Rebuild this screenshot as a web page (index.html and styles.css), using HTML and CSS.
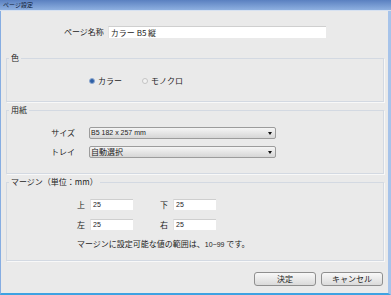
FILE: index.html
```html
<!DOCTYPE html>
<html lang="ja">
<head>
<meta charset="utf-8">
<title>ページ設定</title>
<link rel="stylesheet" href="styles.css">
</head>
<body>
<div class="window">
  <div class="titlebar"><span class="title">ページ設定</span></div>
  <div class="frame">
    <div class="name-row">
      <span class="name-label">ページ名称</span>
      <div class="textfield name-field">カラー B5 縦</div>
    </div>

    <fieldset class="group g-color">
      <legend>色</legend>
      <div class="radio-row">
        <span class="radio"><span class="dot on"></span>カラー</span>
        <span class="radio"><span class="dot"></span>モノクロ</span>
      </div>
    </fieldset>

    <fieldset class="group g-paper">
      <legend>用紙</legend>
      <div class="form-grid">
        <span class="lbl">サイズ</span>
        <div class="combo"><span class="combo-text latin">B5 182 x 257 mm</span><span class="arrow"></span></div>
        <span class="lbl">トレイ</span>
        <div class="combo"><span class="combo-text">自動選択</span><span class="arrow"></span></div>
      </div>
    </fieldset>

    <fieldset class="group g-margin">
      <legend>マージン（単位：mm）</legend>
      <div class="margin-grid">
        <div class="pair"><span class="mlbl">上</span><div class="textfield small latin">25</div></div>
        <div class="pair"><span class="mlbl">下</span><div class="textfield small latin">25</div></div>
        <div class="pair"><span class="mlbl">左</span><div class="textfield small latin">25</div></div>
        <div class="pair"><span class="mlbl">右</span><div class="textfield small latin">25</div></div>
      </div>
      <p class="note">マージンに設定可能な値の範囲は、<span class="latin">10~99</span> です。</p>
    </fieldset>

    <div class="buttons">
      <button class="btn">決定</button>
      <button class="btn">キャンセル</button>
    </div>
  </div>
</div>
</body>
</html>
```
FILE: styles.css
```css
html, body {
  margin: 0;
  padding: 0;
}
body {
  font-family: "Noto Sans CJK JP", "Noto Sans", sans-serif;
  font-size: 8px;
  color: #1c1c1c;
  background: #eaeaea;
}
.latin {
  font-family: "Liberation Sans", "Noto Sans CJK JP", sans-serif;
  font-size: 7px;
}
.window {
  width: 391px;
  height: 295px;
  display: flex;
  flex-direction: column;
}
.titlebar {
  height: 10px;
  border-bottom: 1px solid #d6e1f1;
  background: linear-gradient(#5a80c0, #8eb0e0);
  display: flex;
  align-items: center;
}
.title {
  font-size: 6px;
  line-height: 10px;
  padding-left: 3px;
  color: #0f1a33;
}
.frame {
  flex: 1;
  background: #eaeaea;
  border-left: 1px solid #86ade2;
  border-right: 3px solid #a6c3ea;
  border-bottom: 2px solid #3ea2e2;
  display: flex;
  flex-direction: column;
}
.name-row {
  display: flex;
  align-items: center;
  gap: 4px;
  margin-top: 15px;
  padding-left: 63px;
  height: 12px;
}
.name-label {
  line-height: 12px;
}
.textfield {
  box-sizing: border-box;
  background: #fff;
  border-top: 1px solid #cfcfcf;
  border-left: 1px solid #e2e2e2;
  padding-left: 2px;
  display: flex;
  align-items: center;
}
.name-field {
  width: 218px;
  height: 12px;
  line-height: 11px;
}
.group {
  margin: 0 4px 0 5px;
  padding: 0;
  min-width: 0;
  border: 1px solid #d3d9e2;
  box-shadow: 1px 1px 0 #f8f8f8;
}
.group legend {
  margin-left: 2px;
  padding: 0 2px;
  font-size: 8px;
  line-height: 10px;
}
.g-color {
  margin-top: 15px;
  padding-top: 13px;
  padding-bottom: 15px;
}
.radio-row {
  display: flex;
  gap: 20px;
  padding-left: 82px;
  line-height: 10px;
}
.radio {
  display: flex;
  align-items: center;
}
.dot {
  box-sizing: border-box;
  width: 6px;
  height: 6px;
  border-radius: 50%;
  margin-right: 3px;
  border: 1px solid #c4c4c4;
  background: #f2f2f2;
}
.dot.on {
  border-color: #8fa9cf;
  background: #2d5fa6;
}
.g-paper {
  margin-top: 3px;
  padding-top: 12px;
  padding-bottom: 15px;
}
.form-grid {
  display: grid;
  grid-template-columns: 68px 187px;
  column-gap: 14px;
  row-gap: 7px;
}
.lbl {
  text-align: right;
  line-height: 12px;
}
.combo {
  box-sizing: border-box;
  height: 12px;
  border: 1px solid #9c9c9c;
  border-radius: 2px;
  background: linear-gradient(#f5f5f5, #d6d6d6);
  display: flex;
  align-items: center;
  padding: 0 3px 0 1px;
}
.combo-text {
  line-height: 10px;
}
.arrow {
  margin-left: auto;
  width: 0;
  height: 0;
  border-left: 2px solid transparent;
  border-right: 2px solid transparent;
  border-top: 3px solid #111;
}
.g-margin {
  margin-top: 3px;
  padding-top: 12px;
  padding-bottom: 10px;
}
.margin-grid {
  display: grid;
  grid-template-columns: 56px 56px;
  column-gap: 27px;
  row-gap: 9px;
  padding-left: 70px;
}
.pair {
  display: flex;
  align-items: center;
  gap: 5px;
}
.mlbl {
  width: 8px;
  line-height: 11px;
}
.textfield.small {
  width: 43px;
  height: 11px;
  line-height: 10px;
}
.note {
  margin: 9px 0 0;
  padding-left: 70px;
  line-height: 10px;
}
.buttons {
  display: flex;
  justify-content: flex-end;
  gap: 5px;
  margin-top: 11px;
  padding-right: 5px;
}
.btn {
  box-sizing: border-box;
  width: 62px;
  height: 14px;
  padding: 0;
  border: 1px solid #8f8f8f;
  border-radius: 3px;
  background: linear-gradient(#f8f8f8, #dadada);
  font-family: "Noto Sans CJK JP", sans-serif;
  font-size: 8px;
  line-height: 12px;
  color: #1c1c1c;
}
```
